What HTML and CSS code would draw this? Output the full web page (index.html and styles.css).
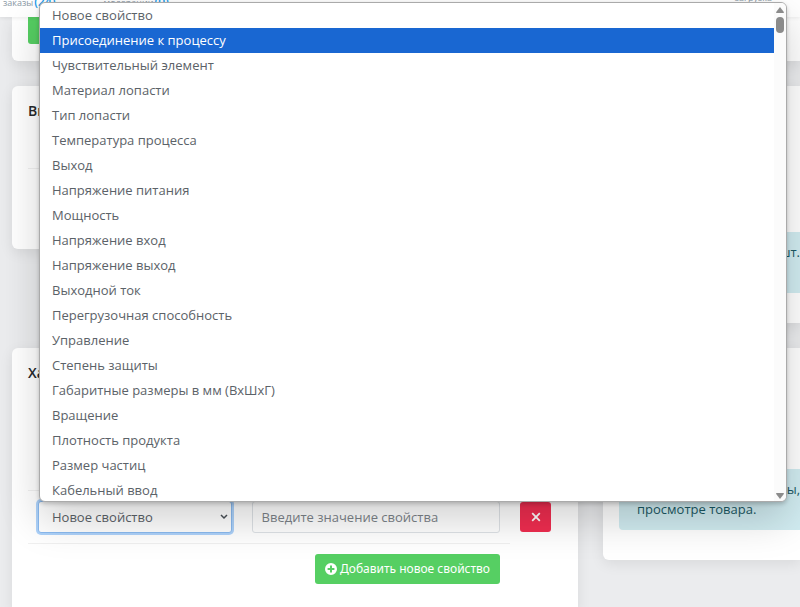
FILE: index.html
```html
<!DOCTYPE html>
<html lang="ru">
<head>
<meta charset="utf-8">
<title>Свойства товара</title>
<link rel="stylesheet" href="styles.css">
</head>
<body>
<header class="topbar">
  <nav class="topbar-nav">
    <a href="#"><span>заказы</span><b>(24)</b></a>
    <a href="#"><span>модерации</span><b>(0)</b></a>
  </nav>
  <a class="topbar-load" href="#">загрузка</a>
</header>
<main class="page">
  <section class="card card-actions"><button class="btn btn-save" type="button" aria-label="Сохранить"></button></section>
  <section class="card card-output">
    <h2>Вы</h2>
    <div class="output-row"></div>
  </section>
  <section class="card card-stock">
    <p class="alert"><span class="line-end">шт.</span></p>
  </section>
  <section class="card card-props">
    <h2>Ха</h2>
    <div class="props-row">
      <div class="props-fields">
        <select class="field" aria-label="Свойство"><option>Новое свойство</option></select>
        <input class="field" type="text" aria-label="Значение" placeholder="Введите значение свойства">
      </div>
      <button class="btn btn-remove" type="button" aria-label="Удалить">
        <svg width="10" height="10" viewBox="0 0 10 10"><path d="M1.2 1.2 8.8 8.8M8.8 1.2 1.2 8.8" fill="none" stroke="currentColor" stroke-width="1.8"/></svg>
      </button>
    </div>
    <div class="props-add">
      <button class="btn btn-add" type="button">
        <svg width="12" height="12" viewBox="0 0 12 12"><path fill="currentColor" fill-rule="evenodd" d="M6 0a6 6 0 1 0 0 12A6 6 0 0 0 6 0ZM5 2.6h2V5h2.4v2H7v2.4H5V7H2.6V5H5Z"/></svg>
        Добавить новое свойство
      </button>
    </div>
  </section>
  <section class="card card-note">
    <p class="alert"><span class="line-end">ы,</span><span>просмотре товара.</span></p>
  </section>
</main>
<div class="popup">
  <ul class="options" role="listbox" aria-label="Свойства">
    <li role="option">Новое свойство</li>
    <li role="option" aria-selected="true" class="active">Присоединение к процессу</li>
    <li role="option">Чувствительный элемент</li>
    <li role="option">Материал лопасти</li>
    <li role="option">Тип лопасти</li>
    <li role="option">Температура процесса</li>
    <li role="option">Выход</li>
    <li role="option">Напряжение питания</li>
    <li role="option">Мощность</li>
    <li role="option">Напряжение вход</li>
    <li role="option">Напряжение выход</li>
    <li role="option">Выходной ток</li>
    <li role="option">Перегрузочная способность</li>
    <li role="option">Управление</li>
    <li role="option">Степень защиты</li>
    <li role="option">Габаритные размеры в мм (ВхШхГ)</li>
    <li role="option">Вращение</li>
    <li role="option">Плотность продукта</li>
    <li role="option">Размер частиц</li>
    <li role="option">Кабельный ввод</li>
  </ul>
  <div class="scrollbar">
    <svg width="8" height="6" viewBox="0 0 8 6"><path d="M4 0 8 5.2Q8 6 7.2 6H.8Q0 6 0 5.2Z" fill="#8b8b8b"/></svg>
    <div class="thumb"></div>
    <svg width="8" height="6" viewBox="0 0 8 6"><path d="M4 6 8 .8Q8 0 7.2 0H.8Q0 0 0 .8Z" fill="#8b8b8b"/></svg>
  </div>
</div>
</body>
</html>
```
FILE: styles.css
```css
* { box-sizing: border-box; }
html { height: 100%; overflow: hidden; }
body {
  margin: 0;
  height: 100%;
  overflow: hidden;
  background: #ebecee;
  color: #5b6268;
  font: 13px/20px "Open Sans", sans-serif;
}
.topbar {
  position: relative;
  display: flex;
  justify-content: space-between;
  height: 32px;
  margin-top: -15px;
  padding: 8px 28px 0 3px;
  background: #fff;
  box-shadow: 0 1px 4px rgba(0, 0, 0, .08);
}
.topbar a { color: #8a98a5; font-size: 9px; line-height: 18px; text-decoration: none; }
.topbar b { margin-left: 1px; color: #1c9ceb; font-size: 12px; font-weight: 600; }
.topbar-nav { display: flex; gap: 48px; }
.topbar .topbar-load { line-height: 10px; }
.page {
  display: grid;
  grid-template-columns: minmax(0, 566fr) minmax(0, 197fr);
  grid-template-rows: 44px 237px auto;
  gap: 25px;
  align-items: start;
  padding-left: 12px;
}
.card {
  padding: 15px 0 30px 16px;
  background: #fff;
  border-radius: 6px;
  box-shadow: 0 4px 14px rgba(0, 0, 0, .08);
}
.card h2 { margin: 0; color: #25282b; font-size: 14px; line-height: 20px; font-weight: 600; }
.card-actions { grid-column: 1 / -1; height: 44px; padding-top: 0; border-radius: 0 0 0 6px; }
.card-output { height: 163px; }
.output-row { height: 48px; border-bottom: 1px solid #f0f0f0; }
.card-stock { height: 237px; padding-top: 146px; border-radius: 6px 0 0 6px; }
.card-note { padding-top: 121px; border-radius: 6px 0 0 6px; }
.alert {
  display: flex;
  flex-direction: column;
  height: 61px;
  margin: 0;
  padding: 10px 0 10px 18px;
  border-radius: 4px 0 0 4px;
  background: #d1ecf1;
  color: #1b5964;
  white-space: nowrap;
}
.line-end { align-self: flex-end; }
.btn {
  display: inline-flex;
  align-items: center;
  justify-content: center;
  height: 30px;
  border: 0;
  border-radius: 3px;
  color: #fff;
  font: 12px/20px "Noto Sans", sans-serif;
}
.btn-save { width: 80px; height: 27px; border-radius: 0 0 3px 3px; background: #56cf63; }
.props-row {
  display: flex;
  gap: 10px;
  align-items: center;
  margin-top: 107px;
  padding-right: 27px;
}
.props-fields {
  flex: 1;
  display: grid;
  grid-template-columns: 194fr 249fr;
  gap: 20px;
  padding: 10px;
  border-top: 1px solid #f0f0f0;
  border-bottom: 1px solid #f0f0f0;
}
.field {
  width: 100%;
  min-width: 0;
  height: 32px;
  margin: 0;
  padding: 0 9px;
  border: 1px solid #dee2e6;
  border-radius: 3px;
  background: #fff;
  color: #5b6268;
  font: 13px/20px "Open Sans", sans-serif;
}
.field::placeholder { color: #7c8389; opacity: 1; }
select.field {
  appearance: none;
  padding: 0 13px;
  border-color: #8abaf0;
  background: #fff url("data:image/svg+xml,%3Csvg xmlns='http://www.w3.org/2000/svg' width='8' height='6' viewBox='0 0 8 6'%3E%3Cpath d='M1 1l3 3 3-3' fill='none' stroke='%23495057' stroke-width='1.5'/%3E%3C/svg%3E") no-repeat right 3px center;
  box-shadow: 0 0 0 2px #add2fa;
}
.btn-remove { width: 31px; padding: 0; background: #f02d50; }
.props-add { display: flex; justify-content: flex-end; padding: 10px 78px 0 0; }
.btn-add { gap: 3px; padding: 0 10px; background: #56cf63; }
.popup {
  position: absolute;
  top: 2px;
  left: 39px;
  right: 13px;
  display: flex;
  height: 500px;
  overflow: hidden;
  border: 1px solid #aaa;
  border-radius: 6px;
  background: #fff;
  box-shadow: 0 18px 40px rgba(0, 0, 0, .18), 0 2px 4px rgba(0, 0, 0, .2);
}
.options { flex: 1; margin: 0; padding: 0; list-style: none; }
.options li { height: 25px; padding-left: 12px; line-height: 25px; }
.options .active { background: #1967d2; color: #fff; }
.scrollbar {
  display: flex;
  flex-direction: column;
  align-items: center;
  width: 12px;
  padding: 4px 0 2px;
  background: #fbfbfb;
}
.thumb { width: 8px; height: 16px; margin: 4px 0 auto; border-radius: 4px; background: #8b8b8b; }
```
